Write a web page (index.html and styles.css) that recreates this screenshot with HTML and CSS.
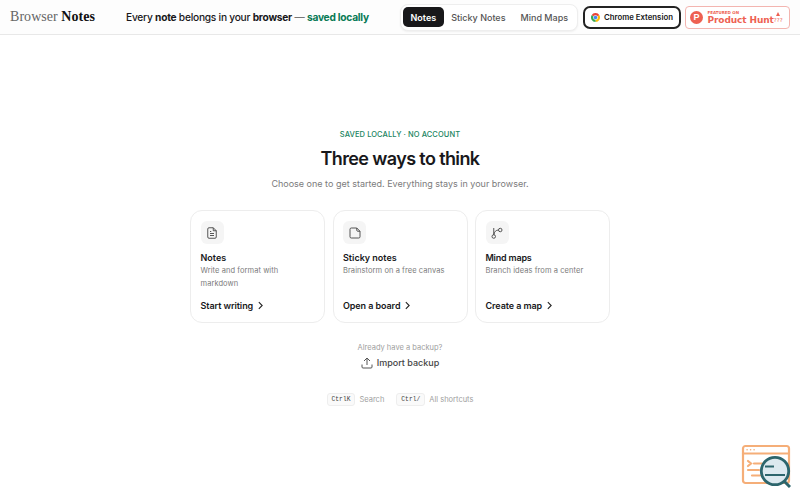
FILE: index.html
```html
<!DOCTYPE html>
<html lang="en">
<head>
  <meta charset="UTF-8" />
  <title>Browser Notes</title>
  <link rel="stylesheet" href="styles.css">
</head>
<body>
  <header class="topbar">
    <a class="logo">Browser <b>Notes</b></a>
    <p class="tagline">Every <b>note</b> belongs in your <b>browser</b> <span class="dash">—</span> <b class="green">saved locally</b></p>
    <nav class="tabs">
      <a class="tab active">Notes</a>
      <a class="tab">Sticky Notes</a>
      <a class="tab">Mind Maps</a>
    </nav>
    <a class="chrome-btn">
      <svg width="9" height="9" viewBox="0 0 24 24">
        <path d="M12 12L1.6 6A12 12 0 0 1 22.4 6Z" fill="#ea4335"/>
        <path d="M12 12L22.4 6A12 12 0 0 1 12 24Z" fill="#fbbc05"/>
        <path d="M12 12L12 24A12 12 0 0 1 1.6 6Z" fill="#34a853"/>
        <circle cx="12" cy="12" r="6.3" fill="#fff"/>
        <circle cx="12" cy="12" r="4.8" fill="#4285f4"/>
      </svg>
      <span>Chrome Extension</span>
    </a>
    <a class="ph-badge">
      <span class="ph-logo">P</span>
      <span class="ph-text">
        <small>FEATURED ON</small>
        <strong>Product Hunt</strong>
      </span>
      <span class="ph-votes"><i></i>???</span>
    </a>
  </header>

  <main class="home">
    <p class="eyebrow">SAVED LOCALLY · NO ACCOUNT</p>
    <h1>Three ways to think</h1>
    <p class="lead">Choose one to get started. Everything stays in your browser.</p>

    <div class="cards">
      <a class="card">
        <span class="card-icon">
          <svg class="icon" width="12" height="12" viewBox="0 0 24 24">
            <path d="M14.5 1.5H6A2.5 2.5 0 0 0 3.5 4v16A2.5 2.5 0 0 0 6 22.5h12a2.5 2.5 0 0 0 2.5-2.5V7.5z"/>
            <path d="M14.5 1.5v6h6M8 9h2.5M8 13h8M8 17h8"/>
          </svg>
        </span>
        <h2>Notes</h2>
        <p>Write and format with markdown</p>
        <span class="action">Start writing
          <svg class="chevron" viewBox="0 0 6 10"><path d="M1 1l4 4-4 4"/></svg>
        </span>
      </a>
      <a class="card">
        <span class="card-icon">
          <svg class="icon" width="12" height="12" viewBox="0 0 24 24">
            <path d="M15.5 2h-11A2.5 2.5 0 0 0 2 4.5v15A2.5 2.5 0 0 0 4.5 22h15a2.5 2.5 0 0 0 2.5-2.5v-11z"/>
            <path d="M15.5 2v4.5a2 2 0 0 0 2 2H22"/>
          </svg>
        </span>
        <h2>Sticky notes</h2>
        <p>Brainstorm on a free canvas</p>
        <span class="action">Open a board
          <svg class="chevron" viewBox="0 0 6 10"><path d="M1 1l4 4-4 4"/></svg>
        </span>
      </a>
      <a class="card">
        <span class="card-icon">
          <svg class="icon" width="12" height="12" viewBox="0 0 24 24">
            <path d="M5.5 2v14M15 6a9 9 0 0 0-9 9"/>
            <circle cx="18.5" cy="6" r="3.5"/>
            <circle cx="5.5" cy="19" r="3.5"/>
          </svg>
        </span>
        <h2 class="tight">Mind maps</h2>
        <p>Branch ideas from a center</p>
        <span class="action">Create a map
          <svg class="chevron" viewBox="0 0 6 10"><path d="M1 1l4 4-4 4"/></svg>
        </span>
      </a>
    </div>

    <p class="backup">Already have a backup?</p>
    <a class="import">
      <svg width="12" height="12" viewBox="0 0 12 12"><path d="M1 7.5V10q0 1 1 1h8q1 0 1-1V7.5M6 8V1M3 4l3-3 3 3"/></svg>
      <span>Import backup</span>
    </a>

    <div class="shortcuts">
      <kbd>CtrlK</kbd><span>Search</span>
      <kbd>Ctrl/</kbd><span>All shortcuts</span>
    </div>
  </main>

  <a class="inspect">
    <svg width="50" height="44" viewBox="0 0 50 44">
      <g fill="none" stroke="#f5ae78" stroke-width="2.2" stroke-linecap="round">
        <rect x="2" y="2" width="46" height="37" rx="2.5"/>
        <path d="M2 9.5h46"/>
        <path d="M6 5.7h.2M9.5 5.7h.2M13 5.7h.2" stroke-width="1.4"/>
        <path d="M7 17l3 2.5L7 22M13 19.5h8M7 26h11M11 31.5h8"/>
      </g>
      <path d="M43 37l6 6" stroke="#2c656c" stroke-width="3"/>
      <circle cx="34" cy="27" r="13.7" fill="#dce9ef" stroke="#2c656c" stroke-width="2.8"/>
      <path d="M24 22.5h9M24 31h20" stroke="#2c656c" stroke-width="2.2"/>
    </svg>
  </a>
</body>
</html>
```
FILE: styles.css
```css
* {
  box-sizing: border-box;
}
body {
  margin: 0;
  height: 500px;
  overflow: hidden;
  background: #fff;
  color: #18181b;
  font-family: Inter, "Liberation Sans", sans-serif;
}
p, h1, h2 {
  margin: 0;
}
svg {
  flex: none;
}

/* top bar */
.topbar {
  display: flex;
  align-items: center;
  height: 35px;
  padding: 0 10px;
  background: #fdfdfd;
  border-bottom: 1px solid #e8e8e8;
  white-space: nowrap;
}
.logo {
  width: 116px;
  font-family: "Liberation Serif", serif;
  font-size: 14px;
  letter-spacing: 0.05px;
  color: #666;
}
.logo b {
  color: #111;
}
.tagline {
  width: 274px;
  font-size: 10.2px;
  font-weight: 500;
  letter-spacing: -0.24px;
}
.tagline b {
  font-weight: 700;
}
.tagline .dash {
  color: #777;
}
.tagline .green {
  color: #087a55;
}
.tabs {
  display: flex;
  align-items: center;
  width: 178px;
  height: 27px;
  padding: 0 2px;
  border: 1px solid #eee;
  border-radius: 8px;
  background: #fff;
  box-shadow: 0 1px 2px rgba(0, 0, 0, 0.06);
}
.tab {
  height: 20px;
  padding: 0 7.5px;
  border-radius: 5px;
  font-size: 9px;
  font-weight: 500;
  line-height: 21px;
  color: #555;
}
.tab.active {
  background: #18181a;
  color: #fff;
  font-weight: 600;
}
.chrome-btn {
  display: flex;
  align-items: center;
  gap: 4px;
  width: 98px;
  height: 23px;
  margin-left: 5px;
  padding-left: 6px;
  border: 2px solid #222;
  border-radius: 7px;
  background: #fff;
  font-size: 7.8px;
  font-weight: 600;
}
.ph-badge {
  display: flex;
  align-items: center;
  width: 105px;
  height: 23px;
  margin-left: 4px;
  padding-left: 4px;
  border: 1px solid #f3b5b0;
  border-radius: 4px;
  background: #fff;
  color: #ee6152;
  font-family: "DejaVu Sans", sans-serif;
}
.ph-logo {
  width: 13px;
  height: 13px;
  border-radius: 50%;
  background: #ee6152;
  color: #fff;
  font: bold 9px/13px "Liberation Sans", sans-serif;
  text-align: center;
}
.ph-text {
  display: flex;
  flex-direction: column;
  margin-left: 4.5px;
}
.ph-text small {
  font-size: 4px;
  font-weight: bold;
  line-height: 5px;
}
.ph-text strong {
  font-size: 9px;
  line-height: 10px;
  letter-spacing: -0.1px;
}
.ph-votes {
  display: flex;
  flex-direction: column;
  align-items: center;
  margin-top: 1px;
  font-size: 5.5px;
  line-height: 8px;
}
.ph-votes i {
  border: 2.5px solid transparent;
  border-top: 0;
  border-bottom: 4px solid #ee6152;
}

/* start screen */
.home {
  display: flex;
  flex-direction: column;
  align-items: center;
  padding-top: 95px;
  white-space: nowrap;
}
.eyebrow {
  font-size: 7.5px;
  font-weight: 500;
  line-height: 10px;
  letter-spacing: 0.08px;
  color: #198461;
}
.home h1 {
  margin-top: 7px;
  font-size: 18px;
  font-weight: 600;
  line-height: 24px;
  letter-spacing: -0.62px;
}
.lead {
  margin-top: 6px;
  font-size: 9px;
  line-height: 13px;
  color: #7b7b7b;
}
.cards {
  display: grid;
  grid-template-columns: repeat(3, 135px);
  gap: 7.5px;
  margin-top: 20px;
}
.card {
  display: flex;
  flex-direction: column;
  align-items: flex-start;
  height: 113px;
  padding: 10px 10px 10px 9.5px;
  border: 1px solid #ededed;
  border-radius: 12px;
}
.card-icon {
  display: grid;
  place-items: center;
  width: 23px;
  height: 23px;
  border-radius: 6px;
  background: #f5f5f5;
}
.icon {
  fill: none;
  stroke: #444;
  stroke-width: 1.8;
  stroke-linejoin: round;
}
.card h2 {
  margin-top: 7px;
  font-size: 9px;
  font-weight: 600;
  line-height: 13px;
}
.card h2.tight {
  letter-spacing: -0.2px;
}
.card p {
  margin-top: 1px;
  font-size: 7.5px;
  line-height: 12.5px;
  letter-spacing: 0.07px;
  color: #7b7b7b;
  white-space: normal;
}
.action {
  display: flex;
  align-items: center;
  gap: 5px;
  margin-top: auto;
  font-size: 9px;
  font-weight: 600;
  line-height: 13px;
  letter-spacing: -0.08px;
}
.chevron {
  width: 5px;
  height: 9px;
  fill: none;
  stroke: #222;
  stroke-width: 1.3;
}
.backup {
  margin-top: 19px;
  font-size: 7.5px;
  line-height: 11px;
  color: #a0a0a0;
}
.import {
  display: flex;
  align-items: center;
  gap: 4px;
  margin-top: 3px;
  font-size: 9px;
  font-weight: 500;
  line-height: 13px;
  color: #444;
}
.import svg {
  fill: none;
  stroke: #555;
}
.shortcuts {
  display: flex;
  align-items: center;
  margin-top: 24px;
  font-size: 7.5px;
  color: #a0a0a0;
}
.shortcuts kbd {
  height: 13px;
  padding: 0 4px;
  border: 1px solid #eee;
  border-radius: 3px;
  background: #fafafa;
  color: #444;
  font: 6.3px/11px "Liberation Mono", monospace;
}
.shortcuts span {
  margin-left: 4px;
}
.shortcuts span + kbd {
  margin-left: 12px;
}

/* floating button over the page */
.inspect {
  position: absolute;
  right: 9px;
  bottom: 12px;
  height: 44px;
}
```
